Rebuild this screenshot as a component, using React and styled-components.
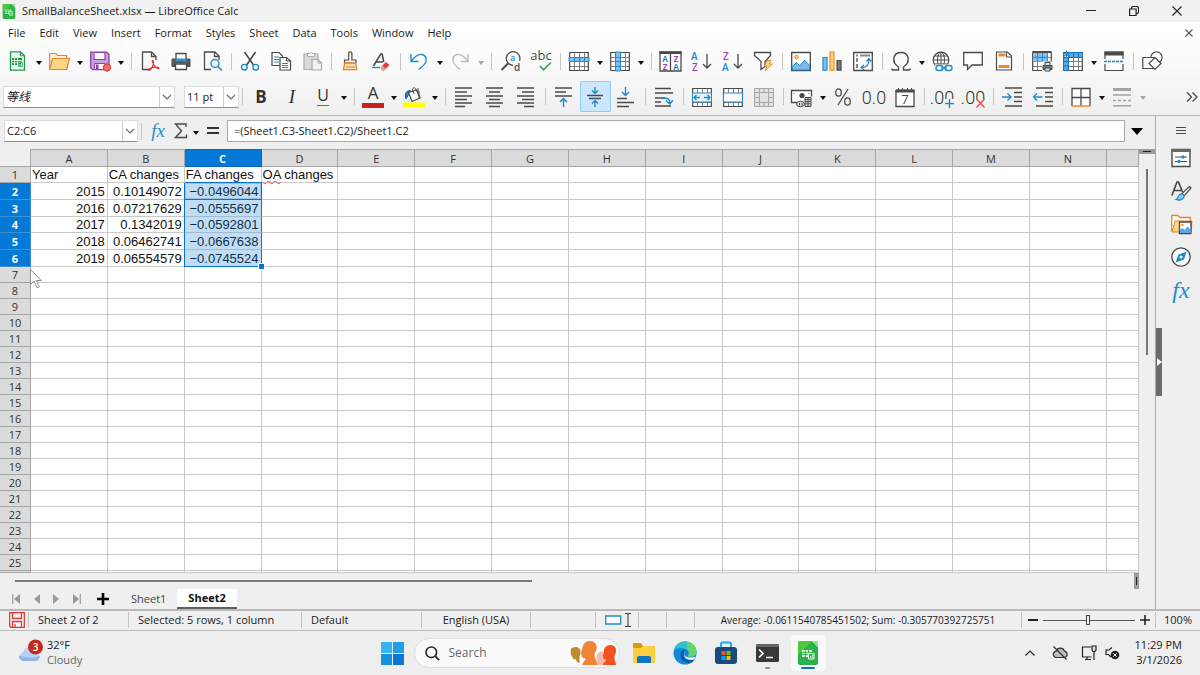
import React from 'react'
import styled, { createGlobalStyle, css } from 'styled-components'

const UI = '"Open Sans", "Noto Sans", "Noto Sans CJK SC", sans-serif'
const INK = '#4a4a48'
const BLUE = '#1e8bcd'
const SELECT = '#0a72cf'

const GlobalStyle = createGlobalStyle`
  * {
    box-sizing: border-box;
  }
  body {
    margin: 0;
    background: #efefef;
    color: #1b1b1b;
    font: 11px/16px ${UI};
  }
  button, input {
    margin: 0;
    padding: 0;
    border: 0;
    background: none;
    color: inherit;
    font: inherit;
  }
  svg {
    display: block;
    flex: none;
  }
`

const Window = styled.div`
  display: flex;
  flex-direction: column;
  min-height: 100vh;
`

const TitleBar = styled.header`
  display: flex;
  align-items: center;
  height: 22px;
  padding: 0 2px;
  background: #f1f1f1;
`

const Title = styled.h1`
  flex: 1;
  margin: 0 0 0 6px;
  font-size: 11px;
  font-weight: 400;
`

const WindowButton = styled.button`
  display: grid;
  place-items: center;
  width: 43px;
  height: 20px;
`

const Chrome = styled.div`
  background: linear-gradient(#fff, #fafafa 45%, #efefef);
`

const MenuBar = styled.nav`
  display: flex;
  align-items: center;
  height: 22px;
  padding: 0 6px 0 1px;
`

const MenuItem = styled.button`
  padding: 0 7px;
`

const Spacer = styled.span`
  flex: 1;
`

const Toolbar = styled.div`
  display: flex;
  align-items: center;
  height: ${props => props.$height}px;
  padding: 0 2px 0 3px;
`

const Tool = styled.button`
  display: grid;
  place-items: center;
  width: 31px;
  height: 31px;
  flex: none;
  padding-right: 1px;
  border-radius: 2px;
  ${props =>
    props.$active &&
    css`
      background: #cce6fd;
      box-shadow: inset 0 0 0 1px #92cbf8;
    `}
`

const Arrow = styled.button`
  display: grid;
  place-items: center;
  width: 10px;
  height: 31px;
  flex: none;

  &::after {
    content: '';
    margin-top: 3px;
    border: 3px solid transparent;
    border-top: 4px solid ${props => (props.disabled ? '#a8a8a8' : '#111')};
    border-bottom: 0;
  }
`

const Divider = styled.i`
  width: 1px;
  height: 17px;
  flex: none;
  margin: 0 3px 0 ${props => (props.$wide ? 5 : 3)}px;
  background: #c6c6c6;
`

const Combo = styled.div`
  display: flex;
  flex: none;
  width: ${props => props.$width}px;
  height: 22px;
  margin-left: ${props => props.$gap || 0}px;
  background: #fff;
  border: 1px solid #dcdcdc;
  border-bottom-color: #8e8e8e;
`

const ComboInput = styled.input`
  flex: 1;
  min-width: 0;
  padding-left: 2px;
  font-style: ${props => (props.$italic ? 'italic' : 'normal')};
  font-size: ${props => (props.$italic ? 12 : 11)}px;
`

const ComboButton = styled.button`
  display: grid;
  place-items: center;
  width: 15px;
  border-left: 1px solid #cfcfcf;
`

const Letter = styled.span`
  font: ${props => props.$font};
  color: ${props => props.$color || '#333'};
`

const UnderBar = styled.span`
  padding: 0 ${props => props.$pad}px;
  line-height: 17px;
  border-bottom: ${props => props.$size}px solid ${props => props.$color};
`

const Workspace = styled.div`
  display: flex;
  flex: 1;
  border-top: 1px solid #b5b5b5;
  border-bottom: 2px solid #b9b9b9;
`

const Main = styled.main`
  display: flex;
  flex: 1;
  flex-direction: column;
  min-width: 0;
`

const FormulaBar = styled.div`
  display: flex;
  align-items: center;
  height: 33px;
  padding: 0 12px 3px 4px;
`

const FormulaTool = styled.button`
  display: grid;
  place-items: center;
  width: ${props => props.$width}px;
  height: 22px;
`

const FormulaInput = styled.input`
  flex: 1;
  min-width: 0;
  height: 22px;
  margin: 0 6px 0 2px;
  padding: 0 6px 1px;
  background: #fff;
  border: 1px solid #a9a9a9;
`

const SheetArea = styled.div`
  display: flex;
  flex: 1;
`

const Grid = styled.table`
  flex: 1;
  min-width: 0;
  width: 100%;
  table-layout: fixed;
  border-collapse: separate;
  border-spacing: 0;
  background: #fff;
`

const Col = styled.col`
  width: ${props => props.$width}px;
`

const Corner = styled.td`
  background: #efefef;
  border-right: 1px solid #a6a6a6;
  border-bottom: 1px solid #a6a6a6;
`

const Heading = styled.th`
  height: ${props => props.$height}px;
  padding: 0;
  overflow: hidden;
  background: #dbdbdb;
  border: 0 solid #a6a6a6;
  border-width: ${props => (props.scope === 'col' ? '1px 1px 1px 0' : '0 1px 1px 0')};
  color: #333;
  font-size: 11px;
  font-weight: 400;
  line-height: 15px;
  ${props =>
    props.$selected &&
    css`
      background: #0479d8;
      border-color: ${props.scope === 'col' ? '#0768bb' : '#3b8fd3'};
      color: #fff;
      font-weight: 700;
    `}
`

const Cell = styled.td`
  position: relative;
  padding: 0 2px 0 1px;
  border: 0 solid #c9c9c9;
  border-width: 0 1px 1px 0;
  color: #111;
  font: 13px/15px "Liberation Sans", Arial, sans-serif;
  text-align: ${props => (props.$number ? 'right' : 'left')};
  white-space: nowrap;
  ${props =>
    props.$selected &&
    css`
      background: #c1ddf4;
      border-right-color: ${SELECT};
      border-bottom-color: ${props.$active || props.$last ? SELECT : '#a3bcd3'};
      box-shadow: -1px 0 0 ${SELECT}${props.$active ? `, 0 -1px 0 ${SELECT}, inset 0 0 0 1px #8fc3ee` : ''};
      color: #12304a;
    `}
`

const FillHandle = styled.i`
  position: absolute;
  right: -3px;
  bottom: -3px;
  z-index: 1;
  width: 5px;
  height: 5px;
  background: ${SELECT};
  box-shadow: 0 0 0 1px #fff;
`

const Pointer = styled.svg`
  position: absolute;
  left: -1px;
  top: 2px;
  z-index: 2;
`

const Misspelt = styled.span`
  text-decoration: underline wavy #e8484a 1px;
  text-underline-offset: 1px;
  text-decoration-skip-ink: none;
`

const VerticalScroll = styled.div`
  display: flex;
  flex-direction: column;
  align-items: center;
  width: 16px;
  flex: none;
`

const Sash = styled.div`
  display: grid;
  place-items: center;
  width: ${props => (props.$upright ? 5 : 16)}px;
  height: ${props => (props.$upright ? 16 : 5)}px;
  background: #9c9c9c;

  &::after {
    content: '';
    width: ${props => (props.$upright ? 1 : 8)}px;
    height: ${props => (props.$upright ? 8 : 1)}px;
    background: #222;
  }
`

const VerticalThumb = styled.div`
  width: 2px;
  height: 186px;
  margin-top: 15px;
  background: #767676;
`

const HorizontalScroll = styled.div`
  display: flex;
  align-items: center;
  justify-content: space-between;
  height: 16px;
  padding: 0 16px 0 15px;
`

const HorizontalThumb = styled.div`
  width: 46%;
  height: 2px;
  background: #7b7b7b;
`

const TabBar = styled.div`
  display: flex;
  align-items: center;
  height: 20px;
  padding-left: 6px;
`

const TabNav = styled.button`
  display: grid;
  place-items: center;
  width: ${props => props.$width || 20}px;
  height: 20px;
`

const Tab = styled.button`
  height: 20px;
  padding: 0 11px;
  color: #444;
  ${props =>
    props.$active &&
    css`
      background: #fff;
      border-bottom: 2px solid #5e5e5e;
      color: #111;
      font-weight: 700;
    `}
`

const Sidebar = styled.aside`
  display: flex;
  width: 45px;
  flex: none;
  border-left: 1px solid #a9a9a9;
`

const DeckHandle = styled.button`
  display: grid;
  place-items: center;
  width: 6px;
  height: 68px;
  margin-top: 212px;
  background: #6b6b6b;
`

const Decks = styled.div`
  display: flex;
  flex: 1;
  flex-direction: column;
  align-items: center;
  padding-top: 4px;
`

const DeckButton = styled.button`
  display: grid;
  place-items: center;
  width: 31px;
  height: ${props => props.$height || 33}px;
`

const StatusBar = styled.footer`
  display: grid;
  grid-template-columns: 29px 100px 173px 120px 109px 65px 43px 28px 28px 1fr 134px 44px;
  height: 20px;
  border-bottom: 1px solid #bdbdbd;
`

const Status = styled.div`
  display: flex;
  align-items: center;
  justify-content: ${props => (props.$center ? 'center' : 'flex-start')};
  gap: 5px;
  height: 16px;
  margin-top: 1px;
  padding-left: ${props => props.$pad || 0}px;
  border-right: ${props => (props.$end ? 0 : 1)}px solid #c2c2c2;
  white-space: nowrap;
`

const Sum = styled.span`
  font-size: 10px;
`

const Zoom = styled.input`
  appearance: none;
  width: 92px;
  height: 12px;
  background: linear-gradient(#555, #555) center / 100% 1px no-repeat;

  &::-webkit-slider-thumb {
    appearance: none;
    width: 4px;
    height: 10px;
    background: #efefef;
    border: 1px solid #444;
  }
`

const Taskbar = styled.div`
  display: grid;
  grid-template-columns: 1fr auto 1fr;
  align-items: center;
  height: 44px;
  background: #eee;
`

const Weather = styled.button`
  display: flex;
  align-items: center;
  gap: 4px;
  padding: 0 0 2px 17px;
  text-align: left;
  line-height: 15px;
`

const Muted = styled.span`
  display: block;
  color: #666;
`

const Apps = styled.div`
  display: flex;
  align-items: center;
`

const TaskButton = styled.button`
  display: grid;
  place-items: center;
  width: 35px;
  height: 36px;
  margin: 0 3px;
  border-radius: 4px;
  background: ${props => (props.$open ? '#fafafa' : 'none')};
`

const SearchBox = styled.label`
  display: flex;
  align-items: center;
  width: 206px;
  height: 30px;
  margin: 0 4px 0 1px;
  padding: 0 3px 0 10px;
  background: #fafafa;
  border: 1px solid #dedede;
  border-radius: 15px;
`

const SearchInput = styled.input`
  flex: 1;
  min-width: 0;
  margin-left: 9px;
  font-size: 12px;

  &::placeholder {
    color: #666;
    opacity: 1;
  }
`

const Tray = styled.div`
  display: flex;
  align-items: center;
  justify-content: flex-end;
  padding-right: 18px;
`

const TrayButton = styled.button`
  display: grid;
  place-items: center;
  width: ${props => props.$width}px;
  height: 28px;
`

const Clock = styled.time`
  margin-left: 12px;
  padding-bottom: 2px;
  text-align: right;
  line-height: 15px;
`

const table = (
  <>
    <path d="M1 1.500h18v18H1z" fill="#fff" />
    <path d="M1 6.500h18M1 10.500h18M1 15.500h18M5.500 2v17M10.500 2v17M15.500 2v17" fill="none" stroke="#7d7d7b" />
    <path d="M.7 1.500h18.600v18H.7z" fill="none" stroke={INK} strokeWidth="1.200" />
  </>
)

const lines = rows => (
  <path d={rows.map(([x, y, w]) => `M${x} ${y}h${w}`).join('')} stroke={INK} strokeWidth="1.400" fill="none" />
)

const small = { fontFamily: 'Open Sans, sans-serif', fontSize: 10, fontWeight: 600 }
const tiny = { fontFamily: 'Open Sans, sans-serif', fontSize: 8, fontWeight: 700, textAnchor: 'middle' }
const decimals = { fontFamily: 'Roboto, sans-serif', fontSize: 18, fontWeight: 300, textAnchor: 'middle', fill: '#333' }

const icons = {
  new: (
    <>
      <path d="M2.500.8h10l4 4v14.400h-14z" fill="#eefaf0" stroke="#1c9a48" strokeWidth="1.300" />
      <path d="M12.500.8v4h4" fill="none" stroke="#1c9a48" />
      <path d="M4 7h10v7H4z" fill="#1c9a48" />
      <path d="M4 9.500h10M4 11.800h6M6.500 7v7M9.500 7v7" stroke="#fff" strokeWidth=".8" />
      <path d="M10 11h5v5h-5z" fill="#1c9a48" stroke="#eefaf0" strokeWidth=".6" />
      <path d="M12 15v-2M13.500 15v-3" stroke="#fff" strokeWidth=".7" />
    </>
  ),
  open: (
    <>
      <path d="M.7 17V2.500h6l2 2h9v3" fill="#fff2dc" stroke="#e58331" strokeWidth="1.200" />
      <path d="M3.500 7.500h17l-2.800 11H.8z" fill="#fbd685" stroke="#e58331" strokeWidth="1.200" />
    </>
  ),
  save: (
    <>
      <path d="M.7 1.200h16l2.300 2v15.500H3L.7 17z" fill="#c9a0dc" stroke="#8e3fae" strokeWidth="1.300" />
      <path d="M4 1.500h11v7H4z" fill="#fdf7ff" stroke="#8e3fae" strokeWidth="1.200" />
      <path d="M4.500 12.500H15v6H4.500z" fill="#fdf7ff" stroke="#8e3fae" />
      <path d="M6 13.500h2.500v5H6z" fill="#8e3fae" />
      <circle cx="17" cy="16.500" r="3.700" fill="#f46b66" stroke="#d8363a" />
    </>
  ),
  pdf: (
    <>
      <path d="M9.500 18.500h-7V1h9l4.500 4.500V9M11.500 1v4.500H16" fill="none" stroke={INK} strokeWidth="1.300" />
      <path d="M12.300 9.500c1.500-.5 1.500 3 .2 6-.9 2-2.500 4.500-3.500 4-1-1 2-3 5-3.400 2.500-.4 5.500.4 5 1.400-.6 1-3.500-1-5-3.500-1.200-2-2.500-4-1.700-4.500z" fill="none" stroke="#e02f2f" strokeWidth="1.100" />
    </>
  ),
  print: (
    <>
      <path d="M1 8h18v7.500h-3V12H4v3.500H1z" fill="#5a5a58" stroke={INK} />
      <path d="M5 2.500h10V9H5z" fill="#fff" stroke={INK} strokeWidth="1.300" />
      <path d="M4.500 7.500h11v3h-11z" fill="#2b92d6" />
      <path d="M4.500 13h11v5.500h-11z" fill="#fff" stroke={INK} strokeWidth="1.300" />
    </>
  ),
  preview: (
    <>
      <path d="M9 18.500H2.500V1H13l4 4v4M12.500 1v4.500H17" fill="none" stroke={INK} strokeWidth="1.300" />
      <circle cx="13" cy="12.500" r="4" fill="#e9f5fd" stroke={BLUE} strokeWidth="1.400" />
      <path d="M16 15.500l4 4" stroke={BLUE} strokeWidth="1.600" />
    </>
  ),
  cut: (
    <>
      <path d="M4.500 1l9.300 13.500M15.500 1L6.300 14.500" stroke={INK} strokeWidth="1.600" />
      <circle cx="4.300" cy="16.200" r="2.800" fill="none" stroke={BLUE} strokeWidth="1.400" />
      <circle cx="15.700" cy="16.200" r="2.800" fill="none" stroke={BLUE} strokeWidth="1.400" />
    </>
  ),
  copy: (
    <>
      <path d="M1 1.500h7l3.500 3.500v9.500H1z" fill="#fff" stroke={INK} strokeWidth="1.200" />
      <path d="M3 6h5M3 8.500h5M3 11h5" stroke={BLUE} />
      <path d="M9 6.500h6.500L19.500 10v9H9z" fill="#fff" stroke={INK} strokeWidth="1.200" />
      <path d="M15.500 6.500V10h4" fill="none" stroke={INK} />
      <path d="M11 12.500h6M11 14.500h6M11 16.500h6" stroke={BLUE} />
    </>
  ),
  paste: (
    <>
      <path d="M2 3h14v15.500H2z" fill="#d9d9d9" stroke="#aaa" strokeWidth="1.200" />
      <path d="M5.500 5.500v-3h2.300a1.300 1.300 0 0 1 2.500 0h2.200v3z" fill="#fafafa" stroke="#aaa" />
      <path d="M10 8.500h6l3.500 3.500v7H10z" fill="#f2f2f2" stroke="#aaa" strokeWidth="1.200" />
      <path d="M16 8.500V12h3.500" fill="none" stroke="#aaa" />
    </>
  ),
  brush: (
    <>
      <path d="M8.700 9V2a1.700 1.700 0 0 1 3.200 0v7h4v3H4.500V9z" fill="#fff" stroke={INK} strokeWidth="1.200" />
      <path d="M5 12h10.500l1.300 6.700H3.300z" fill="#fbe0b0" stroke="#e58331" strokeWidth="1.300" />
      <path d="M6 16h9" stroke="#e58331" />
    </>
  ),
  clear: (
    <>
      <path d="M2.500 15L9.800 3h1.400l1.600 8M5 11h7" fill="none" stroke={INK} strokeWidth="1.500" />
      <path d="M1 16.500h8" stroke={BLUE} strokeWidth="1.400" />
      <path d="M9.500 16.500l5.500-5.500 3.500 3-5.500 5.500h-2z" fill="#dd3d3c" />
      <path d="M9.500 16.500l2-2 3 3.300-1.500 1.700h-2z" fill="#f39a9a" />
    </>
  ),
  undo: <path d="M2 3v7.500h7.500M2 10.500C6 5 9 2.500 13 3.500c6 2 6 9-3.500 15" fill="none" stroke={BLUE} strokeWidth="1.400" />,
  redo: <path d="M18 3v7.500h-7.500M18 10.500C14 5 11 2.500 7 3.500c-6 2-6 9 3.500 15" fill="none" stroke="#bdbdbd" strokeWidth="1.400" />,
  find: (
    <>
      <path d="M13 14.300a6.800 6.800 0 1 1 6.500-4.500" fill="#fff" stroke={INK} strokeWidth="1.300" />
      <path d="M8 12.500l-6.500 6.500" stroke={INK} strokeWidth="2" />
      <text x="12.500" y="10" fill={BLUE} {...small} fontSize="9" textAnchor="middle">a</text>
      <text x="17" y="19.500" fill={INK} {...small} textAnchor="middle">d</text>
    </>
  ),
  spell: (
    <>
      <text x="10" y="9" fill={INK} fontFamily="Open Sans, sans-serif" fontSize="13" textAnchor="middle">abc</text>
      <path d="M9 15l3.500 3.800L20 11.500" fill="none" stroke="#27a658" strokeWidth="1.700" />
    </>
  ),
  row: (
    <>
      {table}
      <path d="M0 6.500h20v4H0z" fill="#83beec" stroke={BLUE} />
      <path d="M5.500 7v3M10.500 7v3M15.500 7v3" stroke={BLUE} />
    </>
  ),
  column: (
    <>
      {table}
      <path d="M5.500 1v19h5V1z" fill="#83beec" stroke={BLUE} />
      <path d="M6 6.500h4M6 10.500h4M6 15.500h4" stroke={BLUE} />
    </>
  ),
  sort: (
    <>
      <path d="M0 1h21v19H0zM10.500 1v19" fill="#fff" stroke={INK} strokeWidth="1.300" />
      <path d="M-.5.500h22v2.500h-22z" fill={INK} />
      <text x="5" y="11" fill={BLUE} {...tiny}>A</text>
      <text x="16" y="11" fill="#a83cc0" {...tiny}>Z</text>
      <text x="5" y="19" fill="#a83cc0" {...tiny}>Z</text>
      <text x="16" y="19" fill={BLUE} {...tiny}>A</text>
    </>
  ),
  ascending: (
    <>
      <text x="0" y="9" fill={BLUE} {...small}>A</text>
      <text x="1" y="20" fill="#a83cc0" {...small}>Z</text>
      <path d="M16 3v14M12 13l4 4 4-4" fill="none" stroke={INK} strokeWidth="1.300" />
    </>
  ),
  descending: (
    <>
      <text x="1" y="9" fill="#a83cc0" {...small}>Z</text>
      <text x="0" y="20" fill={BLUE} {...small}>A</text>
      <path d="M16 3v14M12 13l4 4 4-4" fill="none" stroke={INK} strokeWidth="1.300" />
    </>
  ),
  filter: (
    <>
      <path d="M1.500 1.500h16v3l-5.500 6v5l-4 3v-8l-6.500-6z" fill="#fff" stroke={INK} strokeWidth="1.300" />
      <path d="M14 9.500h4l-1.500 3.500h3L12 20l2-5h-2.500z" fill="#fcd27c" stroke="#ee8b30" />
    </>
  ),
  image: (
    <>
      <path d="M.7 1.500h18.600v18H.7z" fill="#fff" stroke={INK} strokeWidth="1.300" />
      <circle cx="5.500" cy="6" r="1.800" fill="#fcd27c" stroke="#ee8b30" />
      <path d="M1.500 19v-3.500l4-4 3.500 3.300L13.500 9l5.200 5.500V19z" fill="#7cb9e8" stroke={BLUE} />
    </>
  ),
  chart: (
    <>
      <path d="M1 6.500h4v12.700H1z" fill="#83beec" stroke={BLUE} strokeWidth="1.200" />
      <path d="M8 1h4v18.200H8z" fill="#fcd27c" stroke="#ee8b30" strokeWidth="1.200" />
      <path d="M15 9.500h4v9.700h-4z" fill="#777" stroke={INK} strokeWidth="1.200" />
    </>
  ),
  pivot: (
    <>
      <path d="M.7 1.500h18.600v18H.7z" fill="#fff" stroke={INK} strokeWidth="1.300" />
      <path d="M3 4.500h2M7 4.500h10M4 7v4M4 13v4" stroke="#888" strokeWidth="2" />
      <path d="M9 16.500c5 0 7-3 7-8M13.500 10.500l2.500-3 2.500 3M11 14l-3 2.500 3 2.500" fill="none" stroke={BLUE} strokeWidth="1.300" />
    </>
  ),
  omega: <path d="M1 19h6.500v-3C0 11 2 1.500 10 1.500S20 11 12.500 16v3H19M1 19v-1.500M19 19v-1.500" fill="none" stroke={INK} strokeWidth="1.400" />,
  link: (
    <>
      <circle cx="9" cy="9" r="7.800" fill="#fff" stroke={INK} strokeWidth="1.200" />
      <ellipse cx="9" cy="9" rx="3.500" ry="7.800" fill="none" stroke={INK} />
      <path d="M1 9h16M2.500 5h13M2.500 13h13M9 1v16" stroke={INK} />
      <path d="M3 13.500h18v7H3z" fill="#fafafa" />
      <rect x="4" y="14.500" width="7" height="5" rx="2.500" fill="none" stroke={BLUE} strokeWidth="1.400" />
      <rect x="13" y="14.500" width="7" height="5" rx="2.500" fill="none" stroke={BLUE} strokeWidth="1.400" />
      <path d="M9 17h6" stroke={BLUE} strokeWidth="1.300" />
    </>
  ),
  comment: <path d="M.7 1.500h18.600v12.500H9L4.500 18.500V14H.7z" fill="#fff" stroke={INK} strokeWidth="1.300" />,
  header: (
    <>
      <path d="M2.500 1h11l4 4v14h-15z" fill="#fff" stroke={INK} strokeWidth="1.200" />
      <path d="M12.500 1v5h5" fill="none" stroke={INK} />
      <path d="M4.500 4h7M4.500 15.500h11" stroke="#ee8b30" strokeWidth="3" />
    </>
  ),
  printArea: (
    <>
      {table}
      <path d="M1 2h14v8.500H1z" fill="#83beec" />
      <path d="M.5 .8h19" stroke={INK} strokeWidth="1.500" />
      <path d="M1 6.300h14M5.500 2v8.500M10.500 2v8.500" stroke={BLUE} />
      <path d="M10 10.500h11v11H10z" fill="#f7f7f7" />
      <path d="M11 14.500h9v4h-9z" fill="#777" stroke={INK} />
      <path d="M13 11.500h5v3h-5zM13 17h5v3h-5z" fill="#cfe6f8" stroke={INK} />
    </>
  ),
  freeze: (
    <>
      {table}
      <path d="M5.500 1.500h14v5h-14zM.5 6.500h5v13h-5z" fill="#5aa7e3" stroke="#1674bd" />
      <path d="M10.500 1.500v5M15.500 1.500v5M.5 10.500h5M.5 15h5M5.500 1v19M.5 6.500H20" stroke="#1674bd" />
      <path d="M3.500-.5v8M0 1.500l7 4M7 1.500l-7 4" stroke="#1e8bcd" strokeWidth="1.200" />
    </>
  ),
  split: (
    <>
      <path d="M1 8V1h18v7M1 13v6.500h18V13" fill="#fff" stroke={INK} strokeWidth="1.200" />
      <path d="M.5.500h19v4H.500z" fill={INK} />
      <path d="M0 10.500h20" stroke={BLUE} strokeWidth="1.300" strokeDasharray="3 1" />
    </>
  ),
  shapes: (
    <>
      <circle cx="14.500" cy="6.500" r="5.600" fill="#fff" stroke={INK} strokeWidth="1.200" />
      <path d="M.8 6.500h11v11H.8z" fill="#fff" stroke={INK} strokeWidth="1.200" />
      <path d="M13 6.500l6 6-6 6-6-6z" fill="#fff" stroke={INK} strokeWidth="1.200" />
    </>
  ),
  left: lines([[1, 1, 17], [1, 5, 12], [1, 9, 17], [1, 12.500, 12], [1, 16, 17], [1, 19.500, 10]]),
  center: lines([[1, 1, 17], [4, 5, 11], [1, 9, 17], [4, 12.500, 11], [1, 16, 17], [4, 19.500, 11]]),
  right: lines([[1, 1, 17], [6, 5, 12], [1, 9, 17], [6, 12.500, 12], [1, 16, 17], [8, 19.500, 10]]),
  top: (
    <>
      {lines([[1, 1, 17], [1, 5, 11], [1, 9, 17]])}
      <path d="M9.500 20v-8M6 15l3.500-3.500L13 15" fill="none" stroke={BLUE} strokeWidth="1.400" />
    </>
  ),
  middle: (
    <>
      {lines([[2, 8.500, 16], [4, 11.500, 12]])}
      <path d="M10 0v6M7 3.500l3 3 3-3M10 20v-6M7 16.500l3-3 3 3" fill="none" stroke={BLUE} strokeWidth="1.400" />
    </>
  ),
  bottom: (
    <>
      {lines([[1, 11.500, 10], [1, 15.500, 17], [1, 19.500, 12]])}
      <path d="M9.500 0v8M6 5l3.500 3.500L13 5" fill="none" stroke={BLUE} strokeWidth="1.400" />
    </>
  ),
  wrap: (
    <>
      {lines([[1, 1.500, 16], [1, 6, 18], [1, 11, 10], [1, 15, 6], [1, 19, 16]])}
      <path d="M9 11.500c5-1 7 1 6.800 4.500M12 13.500l3.800 3.500 3.200-3.800" fill="none" stroke={BLUE} strokeWidth="1.400" />
    </>
  ),
  merge: (
    <>
      {table}
      <path d="M.5 6h19v9H.5z" fill="#e9f4fd" stroke={BLUE} />
      <path d="M2 10.500h6M12 10.500h6M4.500 8L2 10.500 4.500 13M15.500 8l2.500 2.500-2.500 2.500" fill="none" stroke={BLUE} strokeWidth="1.300" />
    </>
  ),
  mergeCells: (
    <>
      {table}
      <path d="M.5 6h19v9H.5z" fill="#fff" stroke={BLUE} strokeWidth="1.200" />
    </>
  ),
  unmerge: (
    <>
      <path d="M.5 1.500h19v18H.5z" fill="#e2e2e2" />
      <path d="M.5 1.500h19v18H.5zM.5 5.500h19M.5 15.500h19M5.500 1.500v18M10 1.500v4M10 15.500v4M14.500 1.500v18M.5 10.500h5M14.500 10.500h5" fill="none" stroke="#a5a5a5" />
    </>
  ),
  currency: (
    <>
      <path d="M5 15.500H-.5v-12h20v6" fill="#fff" stroke={INK} strokeWidth="1.300" />
      <circle cx="10" cy="8.500" r="2.600" fill={INK} />
      <path d="M2 6v1M17 6v1" stroke={INK} />
      <path d="M13 10.500h6v9h-6z" fill="#ddd" stroke={INK} />
      <path d="M13 12.500h6M13 14.500h6M13 16.800h6M16 11v8" stroke={INK} />
      <ellipse cx="8.500" cy="17" rx="4" ry="2.700" fill="#ddd" stroke={INK} />
      <path d="M7.500 16v2.500M10 16v2.500" stroke={INK} />
    </>
  ),
  percent: (
    <>
      <ellipse cx="5.500" cy="5.500" rx="2.800" ry="3.600" fill="none" stroke={INK} strokeWidth="1.300" />
      <ellipse cx="14.500" cy="14.500" rx="2.800" ry="3.600" fill="none" stroke={INK} strokeWidth="1.300" />
      <path d="M15 2L5 18" stroke={INK} strokeWidth="1.300" />
    </>
  ),
  number: <text x="10" y="17" {...decimals}>0.0</text>,
  date: (
    <>
      <path d="M1 3.500h18v16H1z" fill="#fff" stroke={INK} strokeWidth="1.300" />
      <path d="M1 3h18v2H1zM3.500 1v3M7.500 1v3M12.500 1v3M16.500 1v3" fill={INK} stroke={INK} />
      <text x="10" y="17" textAnchor="middle" fill={INK} fontFamily="Open Sans, sans-serif" fontSize="13">7</text>
    </>
  ),
  addDecimal: (
    <>
      <text x="9" y="17" {...decimals}>.00</text>
      <path d="M12 12h9v9h-9z" fill="#f4f4f4" />
      <path d="M16.500 12v9M12 16.500h9" stroke={BLUE} strokeWidth="1.400" />
    </>
  ),
  removeDecimal: (
    <>
      <text x="9" y="17" {...decimals}>.00</text>
      <path d="M12 12h9v9h-9z" fill="#f4f4f4" />
      <path d="M12.500 12l8 8.500M20.500 12l-8 8.500" stroke="#ee4b4a" strokeWidth="1.400" />
    </>
  ),
  indent: (
    <>
      {lines([[3, 1, 17], [12, 5.500, 8], [12, 10, 8], [12, 14.500, 8], [3, 19, 17]])}
      <path d="M0 10h9M5.500 6.500L9 10l-3.500 3.500" fill="none" stroke={BLUE} strokeWidth="1.400" />
    </>
  ),
  outdent: (
    <>
      {lines([[3, 1, 17], [12, 5.500, 8], [12, 10, 8], [12, 14.500, 8], [3, 19, 17]])}
      <path d="M9.500 10H.5M4 6.500L.5 10 4 13.500" fill="none" stroke={BLUE} strokeWidth="1.400" />
    </>
  ),
  borders: (
    <>
      <path d="M1 19V1.500h18V19M10 1.500V19M1 10.500h18" fill="#fff" stroke={INK} strokeWidth="1.300" />
      <path d="M.5 19h19" stroke="#ee8b30" strokeWidth="1.500" />
    </>
  ),
  borderStyle: (
    <>
      <path d="M1 2.500h18" stroke="#a3a3a3" strokeWidth="3" />
      <path d="M1 8h18M1 18.800h18" stroke="#a3a3a3" strokeWidth="1.500" />
      <path d="M1 13.500h18" stroke="#a3a3a3" strokeWidth="1.500" strokeDasharray="3 2" />
    </>
  ),
  fill: (
    <>
      <path d="M2 12c-1.500-5 0-8.500 4.500-8.500L5 7z" fill={BLUE} stroke="#155f98" />
      <path d="M4.500 5.500l8-2.500 3.500 8-8 3.500z" fill="#fff" stroke={INK} strokeWidth="1.300" />
      <path d="M10 7L8.500 3c0-3 3-3 3.500 0l2 2.500V1M15 4v7" fill="none" stroke={INK} />
      <path d="M-1 15.500h22v5H-1z" fill="#ffff00" />
    </>
  ),
  properties: (
    <>
      <path d="M1 1.500h18v17H1z" fill="#fff" stroke={INK} strokeWidth="1.400" />
      <path d="M.5 1h19v3H.5z" fill="#666" />
      <path d="M4 9h12M4 13.500h12" stroke={INK} strokeWidth="1.200" />
      <circle cx="12" cy="9" r="1.700" fill={BLUE} />
      <circle cx="8" cy="13.500" r="1.700" fill={BLUE} />
    </>
  ),
  styles: (
    <>
      <path d="M.8 14.500L6 1h1.500l4 10M3 9.500h7" fill="none" stroke={INK} strokeWidth="1.700" />
      <path d="M18.500 5.500l1.500 1.500-7 8-2.500-2z" fill="#fff" stroke={INK} strokeWidth="1.200" />
      <path d="M9.500 13c2-.5 4 1 3.500 3-1 3-5 3.500-8 2.500 2-1 2-4.500 4.500-5.500z" fill="#9accf2" stroke={BLUE} strokeWidth="1.300" />
    </>
  ),
  gallery: (
    <>
      <path d="M.7 17.500V1.500h6l2 2h10.500v4" fill="#fff" stroke="#e58331" strokeWidth="1.300" />
      <path d="M4 7h17l-1 11H1z" fill="#fbd685" stroke="#e58331" />
      <path d="M8.500 8h11.500v11.500H8.500z" fill="#fff" stroke={INK} strokeWidth="1.300" />
      <circle cx="11.500" cy="11" r="1.200" fill="#ee8b30" />
      <path d="M9 19v-3l2.500-2 2 2 3-3.500 3 3V19z" fill="#5aa7e3" />
    </>
  ),
  navigator: (
    <>
      <circle cx="10" cy="10" r="9.200" fill="#fff" stroke={INK} strokeWidth="1.300" />
      <path d="M15.500 4.500L13 12.500 4.500 15.500 7.500 7.500z" fill={BLUE} />
      <circle cx="10" cy="10" r="1.500" fill="#fff" />
    </>
  ),
}

const Icon = ({ name }) => (
  <svg width="20" height="20" viewBox="0 0 20 20" overflow="visible" aria-hidden="true">
    {icons[name]}
  </svg>
)

const Chevron = ({ up }) => (
  <svg width="10" height="6" viewBox="0 0 10 6" aria-hidden="true">
    <path d={up ? 'M.5 5.500L5 1l4.500 4.500' : 'M1 1l4 4 4-4'} fill="none" stroke={up ? '#222' : '#666'} strokeWidth="1.100" />
  </svg>
)

const Fx = ({ size }) => (
  <Letter $font={`italic ${size}px/22px "Liberation Serif", serif`} $color={BLUE}>
    fx
  </Letter>
)

// "|" is a divider, "v" a drop-down arrow and "d" a disabled one
const STANDARD =
  'new v open v save v | pdf print preview | cut copy paste | brush clear | undo v redo d | find spell | row v column v | sort ascending descending filter | image chart pivot | omega v link comment header | printArea freeze v split | shapes'
const FORMATTING =
  '| bold italic underline v | color v fill v | left center right | top middle bottom | wrap | merge mergeCells unmerge | currency v percent number date | addDecimal removeDecimal | indent outdent | borders v borderStyle d'

const letters = {
  bold: <Letter $font={`700 17px/20px ${UI}`}>B</Letter>,
  italic: <Letter $font={'italic 19px/20px "Liberation Serif", serif'}>I</Letter>,
  underline: (
    <UnderBar $size={1} $pad={0} $color={BLUE}>
      <Letter $font={`16px/17px ${UI}`}>U</Letter>
    </UnderBar>
  ),
  color: (
    <UnderBar $size={5} $pad={6} $color="#c9211e">
      <Letter $font={`17px/15px ${UI}`}>A</Letter>
    </UnderBar>
  ),
}

const Tools = ({ items }) =>
  items.split(' ').map((item, i, all) => {
    if (item === '|') return <Divider key={i} $wide={/^[vd]$/.test(all[i - 1])} />
    if (item === 'v' || item === 'd')
      return <Arrow key={i} disabled={item === 'd'} aria-label={`${all[i - 1]} options`} />
    return (
      <Tool key={i} $active={item === 'middle'} aria-label={item}>
        {letters[item] || <Icon name={item} />}
      </Tool>
    )
  })

const MENUS = ['File', 'Edit', 'View', 'Insert', 'Format', 'Styles', 'Sheet', 'Data', 'Tools', 'Window', 'Help']
const COLUMNS = 'ABCDEFGHIJKLMN'.split('')
const ROW_HEIGHTS = [16, 17, 17, 16, 17, 17]

const DATA = [
  ['Year', 'CA changes', 'FA changes', 'OA changes'],
  ['2015', '0.10149072', '−0.0496044'],
  ['2016', '0.07217629', '−0.0555697'],
  ['2017', '0.1342019', '−0.0592801'],
  ['2018', '0.06462741', '−0.0667638'],
  ['2019', '0.06554579', '−0.0745524'],
]

const Spreadsheet = () => (
  <Grid>
    <colgroup>
      <Col $width={31} />
      {COLUMNS.map(c => (
        <col key={c} />
      ))}
      <Col $width={32} />
    </colgroup>
    <thead>
      <tr>
        <Corner />
        {COLUMNS.map(c => (
          <Heading key={c} scope="col" $height={18} $selected={c === 'C'}>
            {c}
          </Heading>
        ))}
        <Heading scope="col" $height={18} />
      </tr>
    </thead>
    <tbody>
      {Array.from({ length: 25 }, (_, r) => {
        const selectedRow = r > 0 && r < 6
        return (
          <tr key={r}>
            <Heading scope="row" $height={ROW_HEIGHTS[r] || 16} $selected={selectedRow}>
              {r + 1}
            </Heading>
            {COLUMNS.map((c, i) => {
              const value = DATA[r] && DATA[r][i]
              const selected = selectedRow && c === 'C'
              return (
                <Cell
                  key={c}
                  $number={r > 0}
                  $selected={selected}
                  $active={selected && r === 1}
                  $last={selected && r === 5}
                >
                  {value === 'OA changes' ? (
                    <>
                      <Misspelt>OA</Misspelt> changes
                    </>
                  ) : (
                    value
                  )}
                  {selected && r === 5 && <FillHandle />}
                  {r === 6 && c === 'A' && (
                    <Pointer width="13" height="20" viewBox="0 0 13 20" aria-hidden="true">
                      <path d="M.5.500v15l3.500-3.300 3 6.500 2.300-1-3-6.200h5z" fill="#fff" stroke="#8d8d8d" />
                    </Pointer>
                  )}
                </Cell>
              )
            })}
            <Cell />
          </tr>
        )
      })}
      <tr>
        <Heading scope="row" $height={2} />
        {COLUMNS.map(c => (
          <Cell key={c} />
        ))}
        <Cell />
      </tr>
    </tbody>
  </Grid>
)

const NavArrow = ({ back, bar }) => (
  <svg width="9" height="10" viewBox="0 0 9 10" aria-hidden="true">
    <path d={back ? 'M8 0v10L2 5z' : 'M1 0v10l6-5z'} fill="#9a9a9a" />
    {bar && <path d={back ? 'M.7 0v10' : 'M8.300 0v10'} stroke="#9a9a9a" strokeWidth="1.200" />}
  </svg>
)

const CalcLogo = ({ width, height }) => (
  <svg width={width} height={height} viewBox="0 0 20 24" aria-hidden="true">
    <path d="M2 0h12l6 6v16a2 2 0 0 1-2 2H2a2 2 0 0 1-2-2V2a2 2 0 0 1 2-2z" fill="#2db14a" />
    <path d="M0 14L14 0H2a2 2 0 0 0-2 2z" fill="#4fc93c" />
    <path d="M14 0l6 6V1a1 1 0 0 0-1-1z" fill="#8fe08d" />
    <path d="M4 9h10v7H4z" fill="#eaffea" />
    <path d="M4 11.300h10M4 13.600h10M7.300 9v7M10.600 9v7" stroke="#2db14a" />
    <path d="M10.500 12.500h5.500v5.500h-5.500z" fill="#2db14a" stroke="#eaffea" />
    <path d="M12.500 17v-2M14.300 17v-3" stroke="#eaffea" />
  </svg>
)

const SearchPeople = () => (
  <svg width="46" height="24" viewBox="0 0 46 24" aria-hidden="true">
    <path d="M1 7.500c1.500 0 2-1.500 4.500-1.500C9 6 11 8.500 10.500 12c-.3 2-1 3-1 5v5c-2 0-3.500-1.500-3.500-4-2 .5-3.500 0-3.500-2C.5 14 .5 10 1 7.500z" fill="#bd8a2c" />
    <path d="M26 24c1.500-2 1.500-3 1-5-1.500-4 1-8.500 5-8.500 3 0 4 1.500 4 3.500v10z" fill="#f7b7a5" />
    <path d="M12.500 7C13 2.500 16 0 20 0c5 0 7.500 4 6.500 8-.7 3-2.500 4-2 7 .3 3 2.500 5 2.500 7v2H12.500c0-3 3-4 3-7-2.500.5-4-.5-3.800-3-1.200-1-.2-4 .8-7z" fill="#ee8434" />
    <path d="M34 12c-1-5 2.500-8 6.500-8 4 0 6 3 5.500 6.500-.5 3-2 4-1.500 7 .2 2 1.500 4 1.500 6.500H33c0-3 3-2.500 3-5.500-2.500 0-3-1-2.500-3-1-1-.5-2 .5-3.500z" fill="#f4511e" />
  </svg>
)

const taskApps = [
  [
    'File Explorer',
    <>
      <path d="M1 3a1 1 0 0 1 1-1h7l2 3h11a1 1 0 0 1 1 1v4H1z" fill="#d99c0a" />
      <path d="M1 7h8l2-2h12v16a1 1 0 0 1-1 1H1z" fill="#fdcf3f" />
      <path d="M5 22v-5a2 2 0 0 1 2-2h10a2 2 0 0 1 2 2v5z" fill="#1672c4" />
    </>,
  ],
  [
    'Edge',
    <>
      <circle cx="12" cy="12" r="11.500" fill="#1488d8" />
      <path d="M1 10C2 3 8 0 13 .500c7 .5 11 6 10.500 11-.5 4-5 5-9 4 2-2 2-6-2-7.500C8 6 3 7 1 10z" fill="#2cc3cf" />
      <path d="M14 .700c6 .500 10 6 9.500 10.800-.5 4-5 5-9 4 2.500-2.500 2-6-1-8z" fill="#64d66c" />
      <path d="M8 12c-1 4 1 9 7 10 2 .3 5-1 6.500-3-6 2-12-1-11-7 .5-2 1.500-2.500 2.500-2.500C10.500 8 8.500 9.500 8 12z" fill="#0c55a5" />
      <path d="M12.500 10c-2 1-2 5 1 6 3.500 1 7 .5 9-.5-.5 1.500-1 2.300-1.500 3-5 1-9.500-.5-10-4.500-.2-2 .5-3.300 1.500-4z" fill="#f2f6f8" />
    </>,
  ],
  [
    'Microsoft Store',
    <>
      <path d="M7 7V3a1.500 1.500 0 0 1 1.500-1.500h7A1.500 1.500 0 0 1 17 3v4" fill="none" stroke="#22a6e8" strokeWidth="2" />
      <rect x="1" y="6" width="22" height="17" rx="3" fill="#174a80" />
      <path d="M7.500 10h4v4h-4z" fill="#f25022" />
      <path d="M12.500 10h4v4h-4z" fill="#7fba00" />
      <path d="M7.500 15h4v4h-4z" fill="#00a4ef" />
      <path d="M12.500 15h4v4h-4z" fill="#ffb900" />
    </>,
  ],
  [
    'Terminal',
    <>
      <rect x="1" y="3" width="23" height="18" rx="1.500" fill="#383838" />
      <path d="M1 6V4.500A1.500 1.500 0 0 1 2.500 3h20A1.500 1.500 0 0 1 24 4.500V6z" fill="#666" />
      <path d="M4 8.500l4 4-4 4M11 16.500h7" fill="none" stroke="#fff" strokeWidth="1.700" />
      <rect x="10" y="26" width="5" height="2" rx="1" fill="#8a8a8a" />
    </>,
  ],
]

export default function App() {
  return (
    <Window>
      <GlobalStyle />
      <TitleBar>
        <CalcLogo width={14} height={15} />
        <Title>SmallBalanceSheet.xlsx — LibreOffice Calc</Title>
        <WindowButton aria-label="Minimize">
          <svg width="10" height="10" viewBox="0 0 10 10">
            <path d="M0 4.500h10" stroke="#222" />
          </svg>
        </WindowButton>
        <WindowButton aria-label="Restore">
          <svg width="10" height="10" viewBox="0 0 10 10">
            <path d="M.6 3h6.500v6.500H.6zM2.500 3V1.500l1-1h5l1 1v5l-1 1H7.500" fill="none" stroke="#222" strokeWidth="1.200" />
          </svg>
        </WindowButton>
        <WindowButton aria-label="Close">
          <svg width="10" height="10" viewBox="0 0 10 10">
            <path d="M.5.500l9 9M9.500.500l-9 9" stroke="#222" strokeWidth="1.100" />
          </svg>
        </WindowButton>
      </TitleBar>

      <Chrome>
        <MenuBar>
          {MENUS.map(menu => (
            <MenuItem key={menu}>{menu}</MenuItem>
          ))}
          <Spacer />
          <button aria-label="Close document">
            <svg width="10" height="10" viewBox="0 0 10 10">
              <path d="M1.500 1.500l7 7M8.500 1.500l-7 7" stroke="#555" strokeWidth="1.100" />
            </svg>
          </button>
        </MenuBar>
        <Toolbar $height={34}>
          <Tools items={STANDARD} />
        </Toolbar>
        <Toolbar $height={37}>
          <Combo $width={172}>
            <ComboInput aria-label="Font name" defaultValue="等线" $italic />
            <ComboButton aria-label="Show fonts">
              <Chevron />
            </ComboButton>
          </Combo>
          <Combo $width={55} $gap={9}>
            <ComboInput aria-label="Font size" defaultValue="11 pt" />
            <ComboButton aria-label="Show sizes">
              <Chevron />
            </ComboButton>
          </Combo>
          <Tools items={FORMATTING} />
          <Spacer />
          <button aria-label="More">
            <svg width="12" height="10" viewBox="0 0 12 10">
              <path d="M1 .500L5.500 5 1 9.500M6.500.500L11 5 6.500 9.500" fill="none" stroke={INK} strokeWidth="1.300" />
            </svg>
          </button>
        </Toolbar>
      </Chrome>

      <Workspace>
        <Main>
          <FormulaBar>
            <Combo $width={134}>
              <ComboInput aria-label="Name box" defaultValue="C2:C6" />
              <ComboButton aria-label="Show names">
                <Chevron />
              </ComboButton>
            </Combo>
            <Divider />
            <FormulaTool $width={26} aria-label="Function wizard">
              <Fx size={19} />
            </FormulaTool>
            <FormulaTool $width={20} aria-label="Select function">
              <svg width="14" height="16" viewBox="0 0 14 16">
                <path d="M12 4V1H1.500l6 7-6 6.500H12.500v-3" fill="none" stroke={INK} strokeWidth="1.400" />
              </svg>
            </FormulaTool>
            <Arrow aria-label="Select function options" />
            <FormulaTool $width={24} aria-label="Formula">
              <svg width="12" height="8" viewBox="0 0 12 8">
                <path d="M0 1h12M0 6h12" stroke="#333" strokeWidth="2" />
              </svg>
            </FormulaTool>
            <FormulaInput aria-label="Formula input" defaultValue="=(Sheet1.C3-Sheet1.C2)/Sheet1.C2" />
            <button aria-label="Expand formula bar">
              <svg width="12" height="7" viewBox="0 0 12 7">
                <path d="M0 0h12L6 7z" fill="#000" />
              </svg>
            </button>
          </FormulaBar>
          <SheetArea>
            <Spreadsheet />
            <VerticalScroll>
              <Sash />
              <VerticalThumb />
            </VerticalScroll>
          </SheetArea>
          <HorizontalScroll>
            <HorizontalThumb />
            <Sash $upright />
          </HorizontalScroll>
          <TabBar>
            <TabNav aria-label="First sheet">
              <NavArrow back bar />
            </TabNav>
            <TabNav aria-label="Previous sheet">
              <NavArrow back />
            </TabNav>
            <TabNav aria-label="Next sheet">
              <NavArrow />
            </TabNav>
            <TabNav aria-label="Last sheet">
              <NavArrow bar />
            </TabNav>
            <TabNav $width={34} aria-label="Add sheet">
              <svg width="12" height="12" viewBox="0 0 12 12">
                <path d="M6 0v12M0 6h12" stroke="#000" strokeWidth="2.600" />
              </svg>
            </TabNav>
            <Tab>Sheet1</Tab>
            <Tab $active>Sheet2</Tab>
          </TabBar>
        </Main>
        <Sidebar>
          <DeckHandle aria-label="Hide sidebar">
            <svg width="5" height="8" viewBox="0 0 5 8">
              <path d="M0 0l5 4-5 4z" fill="#fff" />
            </svg>
          </DeckHandle>
          <Decks>
            <DeckButton $height={21} aria-label="Sidebar settings">
              <svg width="10" height="8" viewBox="0 0 10 8">
                <path d="M0 .500h10M0 3.500h10M0 6.500h10" stroke={INK} />
              </svg>
            </DeckButton>
            {['properties', 'styles', 'gallery', 'navigator'].map(name => (
              <DeckButton key={name} aria-label={name}>
                <Icon name={name} />
              </DeckButton>
            ))}
            <DeckButton aria-label="Functions">
              <Fx size={24} />
            </DeckButton>
          </Decks>
        </Sidebar>
      </Workspace>

      <StatusBar>
        <Status $pad={9}>
          <svg width="16" height="16" viewBox="0 0 16 16" aria-label="Unsaved changes">
            <path d="M.7.700h14.600v14.600H2L.7 14zM3.500 1v5.500h9V1M3.500 15.300v-5.800h9v5.800M6 12v3" fill="#fff" stroke="#dc3832" strokeWidth="1.300" />
          </svg>
        </Status>
        <Status $pad={9}>Sheet 2 of 2</Status>
        <Status $pad={9}>Selected: 5 rows, 1 column</Status>
        <Status $pad={9}>Default</Status>
        <Status $center>English (USA)</Status>
        <Status />
        <Status $pad={9}>
          <svg width="28" height="16" viewBox="0 0 28 16" aria-label="Standard selection">
            <path d="M.7 4h15v8H.700z" fill="#fff" stroke={BLUE} strokeWidth="1.300" />
            <path d="M20 1.500h2l1 .5 1-.5h2M20 14.500h2l1-.5 1 .5h2M23 2v12" fill="none" stroke="#333" />
          </svg>
        </Status>
        <Status />
        <Status />
        <Status $center>
          <Sum>Average: -0.0611540785451502; Sum: -0.305770392725751</Sum>
        </Status>
        <Status $center>
          <button aria-label="Zoom out">
            <svg width="10" height="10" viewBox="0 0 10 10">
              <path d="M0 5h10" stroke="#222" strokeWidth="2" />
            </svg>
          </button>
          <Zoom type="range" aria-label="Zoom" min="0" max="100" defaultValue="49" />
          <button aria-label="Zoom in">
            <svg width="10" height="10" viewBox="0 0 10 10">
              <path d="M0 5h10M5 0v10" stroke="#222" strokeWidth="1.600" />
            </svg>
          </button>
        </Status>
        <Status $center $end>
          100%
        </Status>
      </StatusBar>

      <Taskbar>
        <Weather>
          <svg width="26" height="26" viewBox="0 0 26 26" aria-hidden="true">
            <path d="M6 22a5 5 0 0 1 0-9 7 7 0 0 1 13 0 4.700 4.700 0 0 1 0 9z" fill="#b5d2f6" />
            <path d="M6 22a5 5 0 0 1-4-6c5 3 14 4 21 1-.5 3-2 5-4 5z" fill="#8fb5ec" />
            <circle cx="18.500" cy="8" r="7.500" fill="#c42b1c" />
            <text x="18.500" y="12" textAnchor="middle" fill="#fff" {...small}>3</text>
          </svg>
          <span>
            32°F
            <Muted>Cloudy</Muted>
          </span>
        </Weather>
        <Apps>
          <TaskButton aria-label="Start">
            <svg width="23" height="23" viewBox="0 0 23 23">
              <path d="M0 0h11v11H0z" fill="#35b5f0" />
              <path d="M12 0h11v11H12z" fill="#209fe6" />
              <path d="M0 12h11v11H0z" fill="#1493e0" />
              <path d="M12 12h11v11H12z" fill="#0a77d0" />
            </svg>
          </TaskButton>
          <SearchBox>
            <svg width="15" height="15" viewBox="0 0 15 15" aria-hidden="true">
              <circle cx="6.300" cy="6.300" r="5.300" fill="none" stroke="#222" strokeWidth="1.600" />
              <path d="M10.200 10.200l4 4" stroke="#222" strokeWidth="1.800" />
            </svg>
            <SearchInput placeholder="Search" aria-label="Search" />
            <SearchPeople />
          </SearchBox>
          {taskApps.map(([name, drawing]) => (
            <TaskButton key={name} aria-label={name}>
              <svg width="24" height="24" viewBox="0 0 24 24" overflow="visible">
                {drawing}
              </svg>
            </TaskButton>
          ))}
          <TaskButton $open aria-label="LibreOffice Calc">
            <svg width="20" height="30" viewBox="0 -3 20 30" overflow="visible">
              <CalcLogo width={20} height={24} />
              <rect x="3" y="26" width="14" height="2" rx="1" fill="#0f6cd0" />
            </svg>
          </TaskButton>
        </Apps>
        <Tray>
          <TrayButton $width={30} aria-label="Show hidden icons">
            <Chevron up />
          </TrayButton>
          <TrayButton $width={30} aria-label="OneDrive">
            <svg width="16" height="14" viewBox="0 0 16 14">
              <path d="M4 11.500a3.200 3.200 0 0 1 0-6.300 4.500 4.500 0 0 1 8.500 0 3.200 3.200 0 0 1 0 6.300z" fill="#bbb" stroke="#333" strokeWidth="1.200" />
              <path d="M1.500.500l13 13" stroke="#333" strokeWidth="1.200" />
            </svg>
          </TrayButton>
          <TrayButton $width={28} aria-label="Network">
            <svg width="16" height="16" viewBox="0 0 16 16">
              <path d="M10 2H1.500v10h9M4 14.500h6M6 12v2.500M13 7v8" fill="none" stroke="#222" strokeWidth="1.200" />
              <path d="M11 1h4v4l-1 1.500h-2L11 5z" fill="#ddd" stroke="#222" strokeWidth="1.200" />
            </svg>
          </TrayButton>
          <TrayButton $width={20} aria-label="Volume muted">
            <svg width="15" height="14" viewBox="0 0 15 14">
              <path d="M7 1.500L4 4H1v4.500h2.500L6 11" fill="none" stroke="#222" strokeWidth="1.200" />
              <circle cx="10" cy="9" r="4.300" fill="#222" />
              <path d="M8.300 7.300l3.400 3.400M11.700 7.300l-3.400 3.400" stroke="#fff" />
            </svg>
          </TrayButton>
          <Clock>
            11:29 PM
            <br />
            3/1/2026
          </Clock>
        </Tray>
      </Taskbar>
    </Window>
  )
}
